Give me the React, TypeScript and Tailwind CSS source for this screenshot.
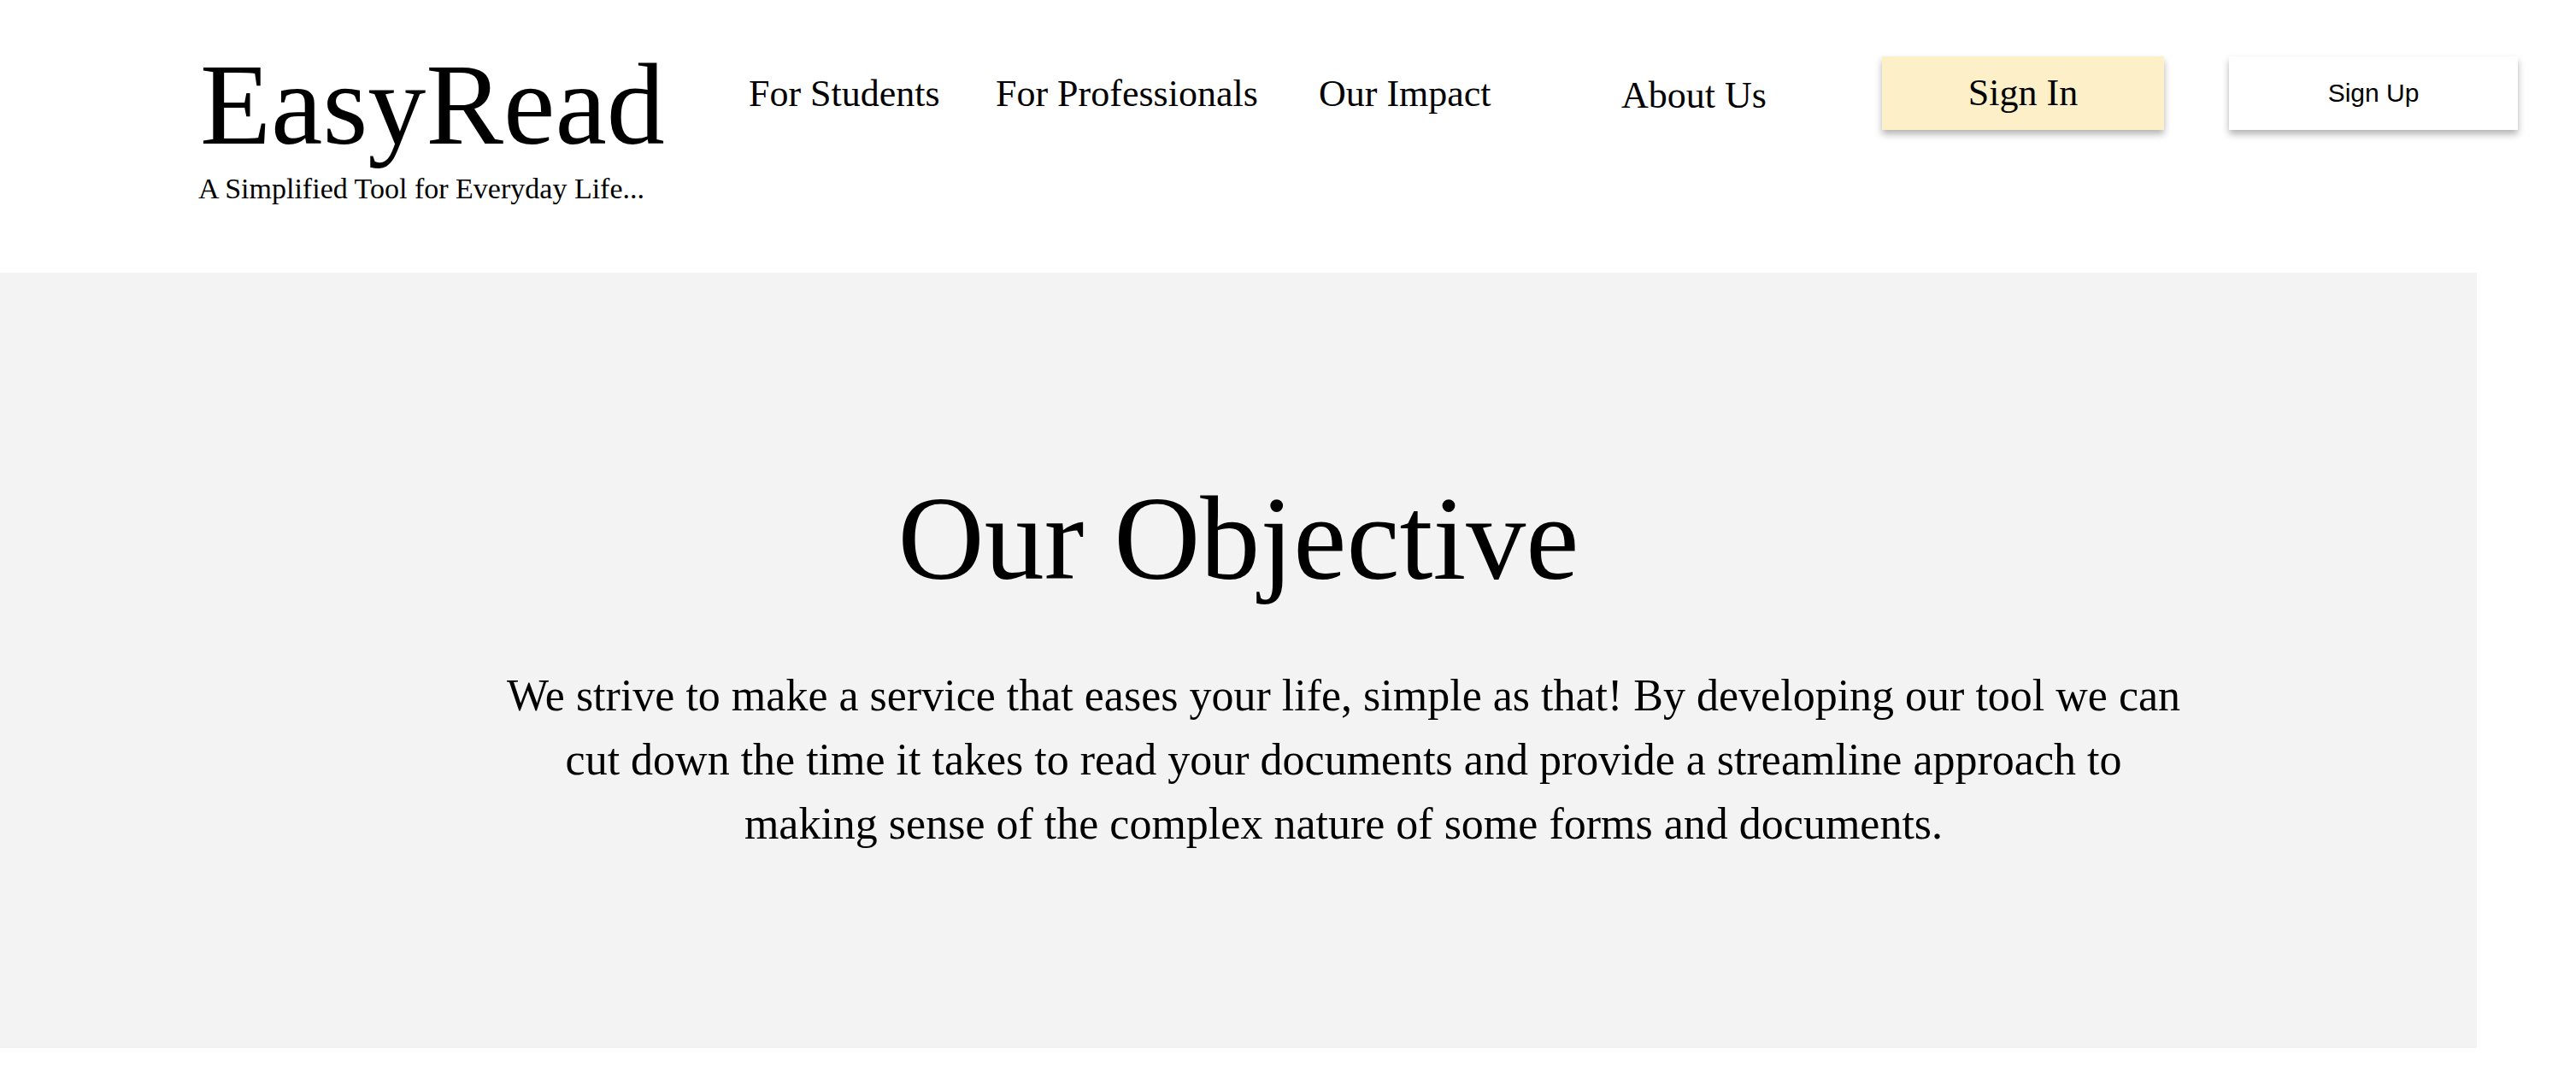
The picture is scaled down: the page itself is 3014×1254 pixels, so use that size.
import React from 'react';

const serif = "font-['Liberation_Serif','Times_New_Roman',serif]";
const sans = "font-['Liberation_Sans',Arial,sans-serif]";

const navLinks = [
    { label: 'For Students', width: 'w-[289px]', top: 'pt-[88px]' },
    { label: 'For Professionals', width: 'w-[378px]', top: 'pt-[88px]' },
    { label: 'Our Impact', width: 'w-[354px]', top: 'pt-[88px]' },
    { label: 'About Us', width: 'w-[305px]', top: 'pt-[90px]' },
];

const Header: React.FC = () => {
    return (
        <header className="h-[319px] bg-white flex items-start">
            <div className="ml-[234px] w-[642px] pt-[54px]">
                <h1 className={`${serif} text-[136px] leading-none text-black`}>EasyRead</h1>
                <p className={`${serif} text-[34px] leading-none text-black mt-[14px] -ml-[2px]`}>
                    A Simplified Tool for Everyday Life...
                </p>
            </div>
            <nav className="flex items-start">
                {navLinks.map(link => (
                    <a key={link.label} href="#" className={`${link.width} ${link.top} ${serif} text-[44px] leading-none text-black whitespace-nowrap`}>
                        {link.label}
                    </a>
                ))}
            </nav>
            <div className="flex items-start gap-[76px] pt-[66px]">
                <button className={`w-[330px] h-[86px] bg-[#fdf0c8] ${serif} text-[44px] leading-none text-black flex items-center justify-center shadow-[0_5px_8px_rgba(0,0,0,0.3)]`}>
                    Sign In
                </button>
                <button className={`w-[338px] h-[86px] bg-white ${sans} text-[30px] leading-none text-black flex items-center justify-center shadow-[0_5px_8px_rgba(0,0,0,0.3)]`}>
                    Sign Up
                </button>
            </div>
        </header>
    );
};

const Objective: React.FC = () => {
    return (
        <section className="w-[2898px] h-[907px] bg-[#f3f3f3] pt-[241px]">
            <h2 className={`${serif} text-[140px] leading-none text-black text-center`}>Our Objective</h2>
            <p className={`${serif} text-[52px] leading-[75px] text-black text-center pl-[246px] mt-[76px]`}>
                We strive to make a service that eases your life, simple as that! By developing our tool we can
                <br />
                cut down the time it takes to read your documents and provide a streamline approach to
                <br />
                making sense of the complex nature of some forms and documents.
            </p>
        </section>
    );
};

const App: React.FC = () => {
    return (
        <div className="w-[3014px] h-[1254px] bg-white overflow-hidden">
            <Header />
            <Objective />
        </div>
    );
};

export default App;
